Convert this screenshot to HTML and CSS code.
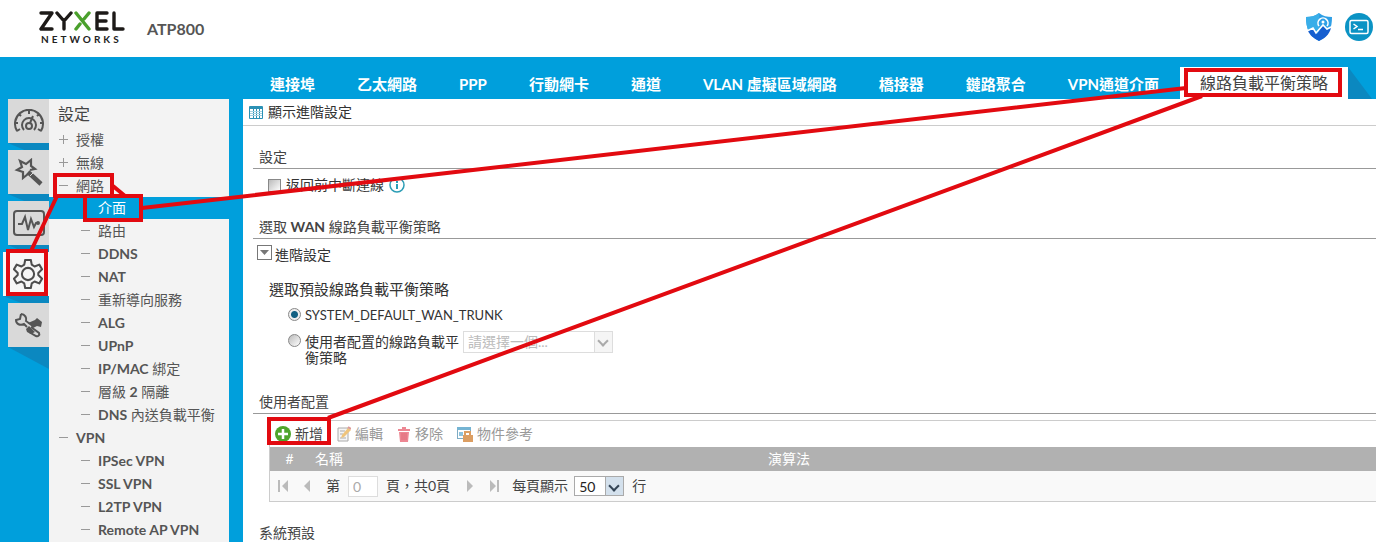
FILE: index.html
```html
<!DOCTYPE html>
<html lang="zh-Hant">
<head>
<meta charset="utf-8">
<title>ATP800</title>
<link rel="stylesheet" href="styles.css">
</head>
<body>
<header class="header">
  <div class="brand">
    <svg class="wordmark" width="88" height="20" viewBox="0 0 88 20" fill="none" stroke="#1d1a18" stroke-width="3.400" stroke-linecap="round" stroke-linejoin="round" role="img" aria-label="ZYXEL">
      <path d="M3 2H14L3 18H14M19 2L26 10L33 2M26 10V18M76 2V18H85M69 2H59V18H69M59 10H68"/>
      <path stroke="#4aa02c" d="M38 2L51 18M51 2L46 8M38 18L42 13"/>
    </svg>
    <span class="networks">NETWORKS</span>
  </div>
  <h1 class="model">ATP800</h1>
  <div class="tools">
    <button class="tool" aria-label="Security">
      <svg width="26" height="28" viewBox="0 0 26 28"><path d="M13 0C17 3 21 4 26 4C26 15 23 23 13 28C3 23 0 15 0 4C5 4 9 3 13 0Z" fill="#2e9fe6"/><path d="M13 0C9 3 5 4 0 4C0 10 1 14 2 17L7 15L13 20Z" fill="#39aee8"/><path d="M2 18L7 16L11 21L17 12L21 17L25 15C23 22 19 25 13 28C7 25 4 22 2 18Z" fill="#165fd0"/><path d="M1 18L7 15L10 20L17 12L21 16L25 14M13 13A5 5 0 1 1 21 13" fill="none" stroke="#fff" stroke-width="1.600"/><circle cx="17" cy="9" r="1.500" fill="#fff"/></svg>
    </button>
    <button class="tool" aria-label="Console">
      <svg width="28" height="28" viewBox="0 0 28 28"><circle cx="14" cy="14" r="14" fill="#0b93c4"/><rect x="5" y="7.500" width="18" height="13" rx="1.500" fill="none" stroke="#fff" stroke-width="1.500"/><path d="M8.500 11L12 13.500L8.500 16M13 16.500H18" fill="none" stroke="#fff" stroke-width="1.500"/></svg>
    </button>
  </div>
</header>
<div class="shell">
  <nav class="rail">
    <button class="rail-item" aria-label="Dashboard"><svg width="32" height="24" viewBox="0 0 32 24" fill="none" stroke="#555" stroke-width="2"><path d="M4 22A14 14 0 1 1 28 22M2 14H5M27 14H30M16 1V5M6 5L8 7M26 5L24 7M4 22L7 20M28 22L25 20"/><path d="M11 21A7 7 0 1 1 21 21M20 7L17 14"/><circle cx="16" cy="17" r="3"/></svg></button>
    <button class="rail-item" aria-label="Wizard"><svg width="30" height="28" viewBox="0 0 30 28" fill="none" stroke="#555" stroke-width="2.200"><path d="M14 16L9 20V14L3 12L8 9L6 3L12 6L17 2V8L21 11L16 12"/><path stroke-width="4.500" d="M14 14L27 26"/><path stroke="#d9d9d9" stroke-width="1" d="M16 18L19 15"/></svg></button>
    <button class="rail-item" aria-label="Monitor"><svg width="32" height="26" viewBox="0 0 32 26" fill="none" stroke="#555" stroke-width="2"><rect x="1" y="1" width="30" height="24" rx="3"/><path d="M5 14H9L12 7L15 20L18 9L21 17L23 13H24"/><circle cx="25" cy="13" r="1"/></svg></button>
    <button class="rail-item rail-on" aria-label="Configuration"><svg width="30" height="30" viewBox="0 0 32 32" fill="none" stroke="#4d4d4d" stroke-width="2.200" stroke-linejoin="round"><path d="M13 1H19L20 6L23 8L28 6L31 11L27 15V17L31 21L28 26L23 24L20 26L19 31H13L12 26L9 24L4 26L1 21L5 17V15L1 11L4 6L9 8L12 6Z"/><circle cx="16" cy="16" r="6.500"/></svg></button>
    <button class="rail-item" aria-label="Maintenance"><svg width="30" height="26" viewBox="0 0 30 26"><path d="M7 2L6 7L2 8C2 12 6 14 10 12L13 15M7 2C11 2 13 6 12 9L16 12" fill="none" stroke="#555" stroke-width="2"/><path d="M14 11L21 8L23 6L28 10L27 15L23 14L19 16ZM12 17L15 14L18 17L21 20L17 22L13 20Z" fill="#555"/><path d="M17 15L25 21C26 23 24 25 22 24L15 20" fill="none" stroke="#555" stroke-width="2"/></svg></button>
  </nav>
  <nav class="tree">
    <h2 class="tree-title">設定</h2>
    <a class="node plus" href="#"><span>授權</span></a>
    <a class="node plus" href="#"><span>無線</span></a>
    <a class="node" href="#"><span>網路</span></a>
    <a class="node leaf current" href="#"><span>介面</span></a>
    <a class="node leaf" href="#"><span>路由</span></a>
    <a class="node leaf" href="#"><b>DDNS</b></a>
    <a class="node leaf" href="#"><b>NAT</b></a>
    <a class="node leaf" href="#"><span>重新導向服務</span></a>
    <a class="node leaf" href="#"><b>ALG</b></a>
    <a class="node leaf" href="#"><b>UPnP</b></a>
    <a class="node leaf" href="#"><span><b>IP/MAC</b> 綁定</span></a>
    <a class="node leaf" href="#"><span>層級 <b>2</b> 隔離</span></a>
    <a class="node leaf" href="#"><span><b>DNS</b> 內送負載平衡</span></a>
    <a class="node" href="#"><b>VPN</b></a>
    <a class="node leaf" href="#"><b>IPSec VPN</b></a>
    <a class="node leaf" href="#"><b>SSL VPN</b></a>
    <a class="node leaf" href="#"><b>L2TP VPN</b></a>
    <a class="node leaf" href="#"><b>Remote AP VPN</b></a>
  </nav>
  <div class="workspace">
    <nav class="tabs">
      <a class="tab" href="#">連接埠</a>
      <a class="tab" href="#">乙太網路</a>
      <a class="tab" href="#">PPP</a>
      <a class="tab" href="#">行動網卡</a>
      <a class="tab" href="#">通道</a>
      <a class="tab" href="#">VLAN 虛擬區域網路</a>
      <a class="tab" href="#">橋接器</a>
      <a class="tab" href="#">鏈路聚合</a>
      <a class="tab" href="#">VPN通道介面</a>
      <a class="tab active" href="#">線路負載平衡策略</a>
    </nav>
    <main class="page">
      <button class="advanced">
        <svg width="14" height="13" viewBox="0 0 14 13"><rect width="14" height="13" rx="1" fill="#2b91b5"/><path d="M1 3H13V12H1Z" fill="#fff"/><path d="M4.500 3V12M7.500 3V12M10.500 3V12" stroke="#2b91b5"/><path d="M1 5.500H13M1 7.500H13M1 9.500H13" stroke="#a5d3e2"/></svg>
        顯示進階設定
      </button>
      <section class="section">
        <h3 class="heading">設定</h3>
        <div class="check-row">
          <input type="checkbox" class="check" id="disconnect"><label for="disconnect">返回前中斷連線</label>
          <svg class="info" width="16" height="16" viewBox="0 0 16 16"><circle cx="8" cy="8" r="7" fill="#fff" stroke="#2b9db5" stroke-width="1.500"/><path d="M8 7V12M8 4V6" stroke="#2b9db5" stroke-width="2"/></svg>
        </div>
      </section>
      <section class="section trunk">
        <h3 class="heading">選取 <b>WAN</b> 線路負載平衡策略</h3>
        <button class="expander"><svg width="15" height="15" viewBox="0 0 15 15"><rect x=".5" y=".5" width="14" height="14" fill="#fff" stroke="#777"/><path d="M3 5H12L7.500 10Z" fill="#777"/></svg>進階設定</button>
        <fieldset class="choices">
          <legend class="legend">選取預設線路負載平衡策略</legend>
          <div class="choice"><input type="radio" class="radio" name="trunk" id="default" checked><label class="latin" for="default">SYSTEM_DEFAULT_WAN_TRUNK</label></div>
          <div class="choice"><input type="radio" class="radio" name="trunk" id="custom"><label class="custom-label" for="custom">使用者配置的線路負載平衡策略</label>
            <span class="picker"><select class="select wide" aria-label="線路負載平衡策略" disabled><option>請選擇一個...</option></select></span></div>
        </fieldset>
      </section>
      <section class="section users">
        <h3 class="heading">使用者配置</h3>
        <div class="grid">
          <div class="actions">
            <button class="action enabled"><svg width="16" height="16" viewBox="0 0 16 16"><circle cx="8" cy="8" r="8" fill="#4fa52b"/><path d="M8 3V13M3 8H13" stroke="#fff" stroke-width="2.500"/></svg>新增</button>
            <button class="action" disabled><svg width="14" height="16" viewBox="0 0 14 16"><path d="M1 2H11V15H1Z" fill="#f6f6f6" stroke="#aaa"/><path d="M3 5H8M3 8H6M3 12H9" stroke="#aaa"/><path d="M5 9L11 2L14 4L7 11L4 12Z" fill="#efc47b"/><path d="M11 1L14 3" stroke="#d99" stroke-width="2"/></svg>編輯</button>
            <button class="action" disabled><svg width="14" height="16" viewBox="0 0 14 16"><path d="M1 3H13V5H1ZM5 1H9V3H5ZM2 6H12L11 16H3Z" fill="#ed8793"/><path d="M5 7V14M7 7V14M9 7V14" stroke="#e06d7b"/></svg>移除</button>
            <button class="action" disabled><svg width="16" height="16" viewBox="0 0 16 16"><rect x=".5" y="1.500" width="13" height="11" fill="#fff" stroke="#7eacc4"/><path d="M0 1H14V4H0Z" fill="#75b4d3"/><path d="M2 6H6V10H2Z" fill="#8fc3dd"/><path d="M6 9H16V16H6Z" fill="#dc9e62"/><path d="M8 9V6H13V9" fill="none" stroke="#dc9e62" stroke-width="2"/></svg>物件參考</button>
          </div>
          <table class="table">
            <thead><tr><th class="col-no">#</th><th class="col-name">名稱</th><th>演算法</th></tr></thead>
          </table>
          <div class="pager">
            <button class="nav" aria-label="第一頁" disabled><svg width="12" height="12" viewBox="0 0 12 12"><path d="M0 0H2V12H0ZM10 0V12L4 6Z"/></svg></button>
            <button class="nav" aria-label="上一頁" disabled><svg width="12" height="12" viewBox="0 0 12 12"><path d="M8 0V12L2 6Z"/></svg></button>
            <label for="pageno">第</label><input class="pageno" id="pageno" value="0" disabled>
            <span class="total">頁，共0頁</span>
            <button class="nav" aria-label="下一頁" disabled><svg width="12" height="12" viewBox="0 0 12 12"><path d="M3 0V12L9 6Z"/></svg></button>
            <button class="nav" aria-label="最後一頁" disabled><svg width="12" height="12" viewBox="0 0 12 12"><path d="M2 0V12L8 6ZM9 0H11V12H9Z"/></svg></button>
            <label for="rows">每頁顯示</label>
            <span class="picker rows"><select class="select small" id="rows"><option>50</option></select></span>
            <span>行</span>
          </div>
        </div>
      </section>
      <section class="section"><h3 class="heading">系統預設</h3></section>
    </main>
  </div>
</div>
<svg class="callouts" width="1376" height="542" viewBox="0 0 1376 542" fill="none" stroke="#e20a10" stroke-width="4" aria-hidden="true">
  <rect x="55" y="175" width="57" height="21"/>
  <rect x="85" y="196" width="56" height="24"/>
  <rect x="8" y="251" width="38" height="43"/>
  <rect x="1186" y="70" width="154" height="25"/>
  <rect x="269" y="419" width="60" height="24"/>
  <path d="M113 186L125 196M57 196L31 251M142 208L1186 88M1202 96L328 418"/>
</svg>
</body>
</html>
```
FILE: styles.css
```css
* { box-sizing: border-box; }
body {
  margin: 0;
  height: 100vh;
  overflow: hidden;
  display: flex;
  flex-direction: column;
  position: relative;
  font: 14px/20px Lato, "Noto Sans CJK TC", sans-serif;
  color: #333;
  background: #009fdc;
}
h1, h2, h3 { margin: 0; font-weight: 400; }
a { color: inherit; text-decoration: none; }
button, input, select { font: inherit; color: inherit; }
button { border: 0; padding: 0; background: none; }
svg { display: block; flex: none; }

.header { height: 57px; flex: none; display: flex; background: #fff; padding-left: 38px; }
.brand { width: 88px; padding-top: 11px; }
.networks { display: block; padding: 2px 0 0 3px; font: 700 10px/12px Lato, sans-serif; letter-spacing: 3px; color: #222; }
.model { margin: 19px 0 0 21px; font: 700 16px/20px Lato, sans-serif; color: #555; }
.tools { margin-left: auto; padding: 13px 3px 0 0; display: flex; align-items: flex-start; gap: 13px; }

.shell { flex: 1; min-height: 0; display: flex; padding-left: 3px; }
.rail { width: 46px; flex: none; padding-top: 42px; display: flex; flex-direction: column; align-items: flex-end; gap: 7px; }
.rail-item { width: 41px; height: 44px; flex: none; display: flex; align-items: center; justify-content: center; background: #d9d9d9; position: relative; }
.rail-item::after { content: ""; position: absolute; left: 0; top: 100%; width: 100%; height: 7px; background: #0b88c0; clip-path: polygon(0 0, 100% 0, 100% 100%, 40% 100%); }
.rail-item:last-child::after { height: 22px; clip-path: polygon(0 0, 100% 0, 100% 100%); }
.rail-on { width: 46px; padding-left: 4px; background: #f6f6f6; }

.tree { width: 180px; flex: none; margin-top: 42px; background: #f3f3f3; color: #555; overflow: hidden; }
.tree-title { height: 29px; padding-left: 9px; font-size: 16px; line-height: 30px; color: #444; }
.node { display: flex; align-items: center; height: 23px; padding-left: 10px; gap: 8px; white-space: nowrap; }
.node::before { content: ""; width: 9px; height: 9px; background: linear-gradient(#999, #999) center / 9px 1px no-repeat; }
.plus::before { background: linear-gradient(#999, #999) center / 9px 1px no-repeat, linear-gradient(#999, #999) center / 1px 9px no-repeat; }
.leaf { padding-left: 32px; }
.current { height: 22px; background: #009fdc; color: #fff; }
.current::before { visibility: hidden; }

.workspace { flex: 1; min-width: 0; padding-left: 14px; display: flex; flex-direction: column; }
.tabs { height: 42px; flex: none; display: flex; align-items: flex-end; padding-left: 6px; font-size: 15px; color: #fff; font-weight: 700; white-space: nowrap; }
.tab { height: 32px; line-height: 34px; padding: 0 21px; }
.active { position: relative; padding: 0 20px; line-height: 32px; font-size: 16px; font-weight: 400; background: #fff; color: #444; }
.active::after { content: ""; position: absolute; left: 100%; top: 0; width: 24px; height: 32px; background: #0b88c0; clip-path: polygon(0 0, 100% 100%, 0 100%); }
.page { flex: 1; min-height: 0; background: #fff; overflow: hidden; }
.advanced { width: 100%; height: 27px; display: flex; align-items: center; gap: 5px; padding-left: 6px; border-bottom: 1px solid #ccc; }
.section { margin-left: 10px; padding-top: 20px; }
.heading { height: 23px; padding-left: 6px; font-size: 14px; line-height: 22px; border-bottom: 1px solid #999; color: #444; }
.check-row { display: flex; align-items: center; height: 32px; padding-left: 15px; gap: 5px; }
.check { appearance: none; width: 13px; height: 13px; margin: 0; border: 1px solid #888; background: linear-gradient(135deg, #bbb, #fff); }
.trunk { padding-top: 15px; }
.expander { display: flex; gap: 3px; padding: 6px 0 0 4px; line-height: 20px; }
.choices { border: 0; margin: 0; padding: 0 0 0 16px; min-width: 0; }
.legend { padding: 14px 0 0; font-size: 15px; line-height: 20px; }
.choice { display: flex; align-items: flex-start; padding: 6px 0 0 19px; }
.radio { appearance: none; width: 13px; height: 13px; margin: 3px 4px 0 0; border: 1px solid #888; border-radius: 50%; background: linear-gradient(135deg, #bbb, #fff); }
.radio:checked { background: radial-gradient(circle, #126082 0 3px, #eee 4px); }
.latin { font-size: 13px; }
.custom-label { width: 158px; line-height: 16px; padding-top: 3px; }
.picker { position: relative; display: flex; }
.select { appearance: none; margin: 0; border: 1px solid #ddd; border-radius: 0; background: #fff; }
.picker::after { content: ""; position: absolute; right: 6px; top: 6px; width: 6px; height: 6px; border: solid #345; border-width: 0 2px 2px 0; transform: rotate(45deg); pointer-events: none; }
.wide { width: 150px; height: 22px; padding: 0 4px; color: #bbb; background: linear-gradient(to left, #f5f5f5 17px, #ddd 17px 18px, #fff 18px); opacity: 1; }
.picker:has(:disabled)::after { border-color: #aaa; }
.users { padding-top: 25px; }
.grid { margin: 6px 0 0 16px; border: 1px solid #ccc; border-right: 0; }
.actions { height: 26px; display: flex; align-items: center; padding-left: 5px; gap: 14px; }
.action { display: flex; align-items: center; gap: 4px; color: #999; }
.enabled { color: #444; }
.table { width: 100%; border-collapse: collapse; table-layout: fixed; background: #b1b1b1; color: #fff; }
.table th { padding: 0 6px; height: 24px; font-weight: 400; text-align: left; }
.table .col-no { width: 39px; text-align: center; }
.table .col-name { width: 453px; }
.pager { display: flex; align-items: center; height: 30px; padding-left: 8px; gap: 12px; background: #f9f9f9; color: #444; }
.nav svg { fill: #bbb; }
.pageno { width: 30px; height: 21px; margin-left: -4px; padding: 0 4px; border: 1px solid #ddd; background: #fff; color: #aaa; }
.total { margin: 0 2px 0 -4px; }
.rows { margin: 0 -4px 0 -6px; }
.small { width: 50px; height: 20px; padding: 0 4px; color: #222; border-color: #aaa; background: linear-gradient(to left, #d3e0ec 17px, #aaa 17px 18px, #fff 18px); }
.callouts { position: absolute; left: 0; top: 0; pointer-events: none; }
```
